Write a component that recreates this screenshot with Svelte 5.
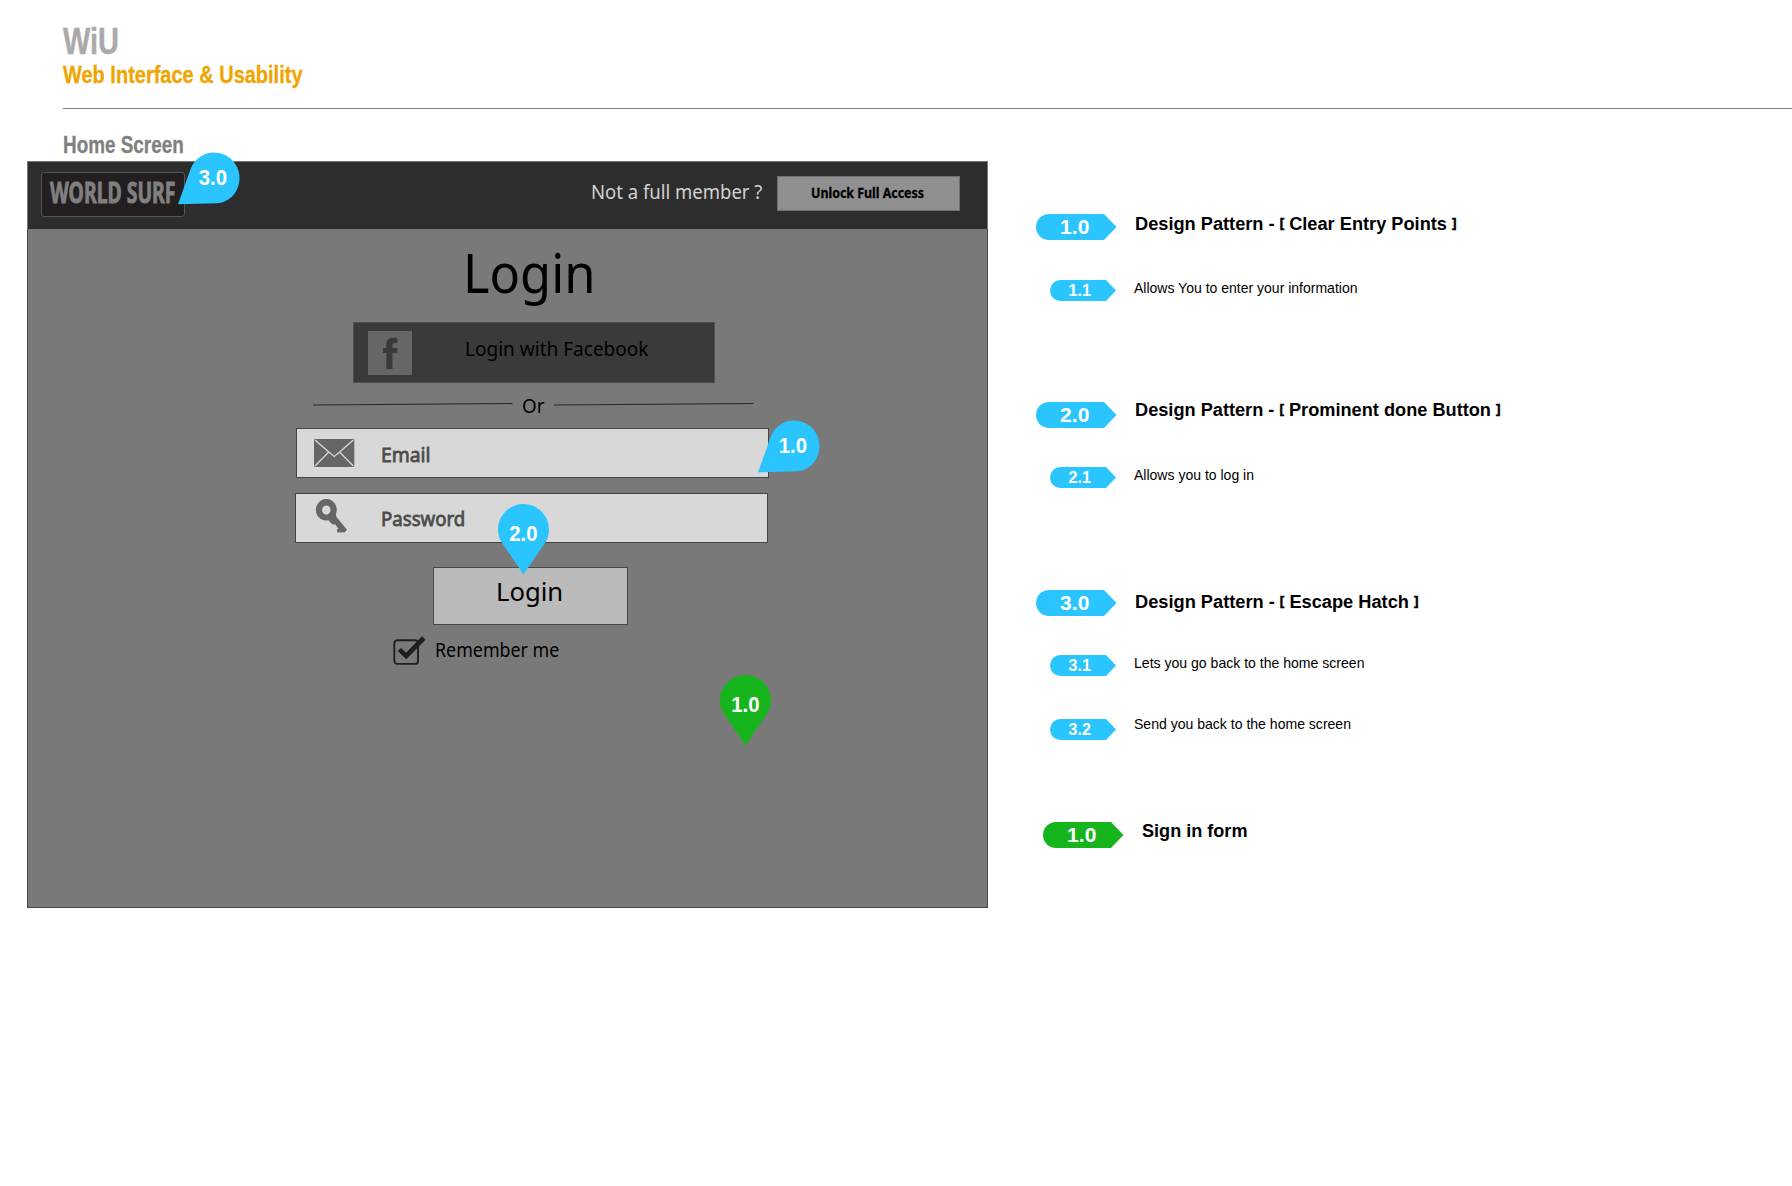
<script>
  const groups = [
    {
      kind: 'first',
      rows: [
        { tag: '1.0', text: 'Design Pattern - [ Clear Entry Points ]', width: 321.5, base: 16, major: true },
        { tag: '1.1', text: 'Allows You to enter your information', width: 223.5, base: 13 }
      ]
    },
    {
      kind: 'second',
      rows: [
        { tag: '2.0', text: 'Design Pattern - [ Prominent done Button ]', width: 365.5, base: 14, major: true },
        { tag: '2.1', text: 'Allows you to log in', width: 120, base: 13 }
      ]
    },
    {
      kind: 'third',
      rows: [
        { tag: '3.0', text: 'Design Pattern - [ Escape Hatch ]', width: 283.5, base: 18, major: true },
        { tag: '3.1', text: 'Lets you go back to the home screen', width: 230.5, base: 12.7 },
        { tag: '3.2', text: 'Send you back to the home screen', width: 217, base: 10 }
      ]
    },
    {
      kind: 'green',
      rows: [{ tag: '1.0', text: 'Sign in form', width: 105.5, base: 15, major: true }]
    }
  ];

  // Brackets are set smaller than the words around them.
  const pieces = (text) => text.split(/([[\]])/).filter((p) => p !== '');
</script>

{#snippet label(text, kind, width, height, base)}
  <svg class="label {kind}" {width} {height}>
    <text x="0" y={base} textLength={width} lengthAdjust="spacingAndGlyphs">{text}</text>
  </svg>
{/snippet}

{#snippet drop(text, place)}
  <svg class="drop {place}" width="62" height="53" viewBox="0 0 62 53">
    <path d="M0 52.300 L13 16 C17 6.500 26 0.500 35.700 0.500 C50 0.500 61.500 12 61.500 26 C61.500 39 52 50.500 39 51.300 Z" />
    <text x="20.700" y="32.500" textLength="28.300" lengthAdjust="spacingAndGlyphs">{text}</text>
  </svg>
{/snippet}

{#snippet pin(text, place)}
  <svg class="pin {place}" width="51" height="71" viewBox="0 0 51 71">
    <path d="M25.500 0 C11.500 0 0 11.500 0 25.500 C0 31 1.500 35.500 4.500 39.500 L25.500 70.500 L46.500 39.500 C49.500 35.500 51 31 51 25.500 C51 11.500 39.500 0 25.500 0 Z" />
    <text x="11.300" y="36.500" textLength="28.300" lengthAdjust="spacingAndGlyphs">{text}</text>
  </svg>
{/snippet}

<div class="page">
  <header class="masthead">
    {@render label('WiU', 'brand', 56, 56, 54)}
    {@render label('Web Interface & Usability', 'tagline', 239.5, 30, 27)}
  </header>

  <div class="title">{@render label('Home Screen', 'caption', 120.7, 52, 44.3)}</div>

  <main class="columns">
    <section class="screen">
      <div class="topbar">
        <div class="logo">
          <svg class="surf" width="125.5" height="43">
            <text x="0" y="30" transform="scale(0.685 1)" textLength="183.200" lengthAdjust="spacingAndGlyphs">WORLD SURF</text>
          </svg>
        </div>
        <div class="member">{@render label('Not a full member ?', 'light', 171.3, 67, 37)}</div>
        <div class="unlock">{@render label('Unlock Full Access', 'small-bold', 113, 33, 21)}</div>
      </div>

      <div class="form">
        <div class="heading">{@render label('Login', 'huge', 132.5, 93, 63.8)}</div>

        <div class="facebook">
          <svg class="fb-icon" width="44" height="44" viewBox="0 0 44 44">
            <rect width="44" height="44" fill="#666" />
            <path fill="#3a3a3a" d="M18.300 38 V22 H15 V17 H18.300 V14 C18.300 9 21 6.700 25.500 6.700 H29.300 V12 H27 C25.200 12 24.500 12.700 24.500 14.500 V17 H29.300 V22 H24.500 V38 Z" />
          </svg>
          {@render label('Login with Facebook', 'myriad', 183.5, 59, 33)}
        </div>

        <div class="divider">
          <svg width="199.5" height="4"><path d="M0 3 L199.500 1.500" /></svg>
          {@render label('Or', 'myriad', 22.5, 45, 29.7)}
          <svg width="199.5" height="4"><path d="M0 3 L199.500 1.500" /></svg>
        </div>

        <div class="field email">
          <svg class="mail" width="40" height="28" viewBox="0 0 40 28">
            <rect width="40.300" height="28" rx="1" fill="#666" />
            <path d="M1 1 L16 14 L20.200 17.500 L24.500 14 L39.300 1 M1 27 L14.500 13.300 M39.300 27 L25.800 13.300" fill="none" stroke="#d8d8d8" stroke-width="1.300" />
          </svg>
          {@render label('Email', 'fieldname', 49.5, 48, 33)}
        </div>

        <div class="field password">
          <svg class="key" width="31" height="34" viewBox="0 0 31 34">
            <path fill="#666" fill-rule="evenodd" d="M10.300 0 A10.500 10.800 0 1 1 10.290 0 Z M10.300 6.500 A4.200 4.500 0 1 0 10.310 6.500 Z" />
            <path fill="#666" d="M19.500 14.500 L20.500 18 L30.800 30.500 L29 33.300 L21.500 33.500 L20.700 31.500 L22 29.500 L19.500 25.500 L16.500 25.500 L12.500 21.500 Z" />
          </svg>
          {@render label('Password', 'fieldname', 84.3, 48, 32)}
        </div>

        <div class="submit">{@render label('Login', 'button-text', 67.2, 56, 32.7)}</div>

        <div class="remember">
          <svg class="check" width="33" height="30" viewBox="0 0 33 30">
            <rect x="1.300" y="4.300" width="23.700" height="23.600" rx="3" fill="none" stroke="#1e1e1e" stroke-width="1.900" />
            <path d="M4.700 15 L8 12 L13 16.700 L29 0.300 L32.500 3.700 L13.300 23.300 Z" fill="#1e1e1e" />
          </svg>
          {@render label('Remember me', 'remember-text', 124.3, 30, 21)}
        </div>
      </div>

      {@render drop('3.0', 'at-logo')}
      {@render drop('1.0', 'at-email')}
      {@render pin('2.0', 'at-submit')}
      {@render pin('1.0', 'at-form')}
    </section>

    <aside class="notes">
      {#each groups as group}
        <div class="group {group.kind}">
          {#each group.rows as row}
            <div class="row" class:major={row.major}>
              {#if row.major}
                <svg class="tag" width="81" height="26" viewBox="0 0 81 26">
                  <path d="M13 0 H68 L80.500 13 L68 26 H13 A13 13 0 0 1 13 0 Z" />
                  <text x="24" y="20.200" font-size="21" textLength="29.500">{row.tag}</text>
                </svg>
              {:else}
                <svg class="tag" width="66" height="21" viewBox="0 0 66 21">
                  <path d="M10.500 0 H56 L66 10.500 L56 21 H10.500 A10.500 10.500 0 0 1 10.500 0 Z" />
                  <text x="18.500" y="16" font-size="16" textLength="22.500">{row.tag}</text>
                </svg>
              {/if}
              <svg class="label note" width={row.width} height="21">
                <text x="0" y={row.base} textLength={row.width} lengthAdjust="spacingAndGlyphs">{#each pieces(row.text) as piece}{#if piece === '[' || piece === ']'}<tspan class="bracket" dy="-2.7">{piece}</tspan>{:else}<tspan dy={piece.startsWith(' ') ? 2.7 : 0}>{piece}</tspan>{/if}{/each}</text>
              </svg>
            </div>
          {/each}
        </div>
      {/each}
    </aside>
  </main>
</div>

<style>
  :global(body) {
    margin: 0;
    background: #fff;
  }

  .page {
    width: 1792px;
    height: 1186px;
    overflow: hidden;
    background: #fff;
    font-family: 'Liberation Sans', sans-serif;
  }

  svg {
    display: block;
    flex: none;
    overflow: visible;
  }

  text {
    white-space: pre;
  }

  .masthead {
    box-sizing: border-box;
    height: 109px;
    margin-left: 62.500px;
    border-bottom: 1px solid #808080;
  }

  .brand { font-size: 37.500px; font-weight: 700; fill: #aaa; stroke: #aaa; stroke-width: 0.500; }
  .tagline { font-size: 24px; font-weight: 700; fill: #f0a400; stroke: #f0a400; stroke-width: 0.300; }
  .title { margin-left: 62.500px; }
  .caption { font-size: 23px; font-weight: 700; fill: #808080; stroke: #808080; stroke-width: 0.300; }

  .columns {
    display: flex;
    align-items: flex-start;
    padding-left: 27px;
  }

  .screen {
    position: relative;
    box-sizing: border-box;
    width: 961px;
    height: 747px;
    border: 1px solid #484848;
    border-top: 0;
    background: #797979;
    font-family: 'Noto Sans', sans-serif;
  }

  .topbar {
    box-sizing: border-box;
    display: flex;
    align-items: flex-start;
    width: 961px;
    height: 68px;
    margin-left: -1px;
    border: 1px solid #777;
    border-bottom: 0;
    background: #2d2d2d;
  }

  .logo {
    box-sizing: border-box;
    width: 144px;
    height: 45px;
    margin: 10px 0 0 13px;
    padding-left: 8px;
    border: 1px solid #555;
    border-radius: 3px;
    background: #231f20;
  }

  .surf {
    font-size: 28px;
    font-weight: 700;
    fill: #808080;
    stroke: #808080;
    stroke-width: 0.900;
  }

  .member { margin-left: 406.200px; }
  .light { font-size: 20.500px; fill: #d2d2d2; }

  .unlock {
    box-sizing: border-box;
    width: 183px;
    height: 35px;
    margin: 14px 0 0 14.500px;
    padding-left: 32.700px;
    border: 1px solid #707070;
    background: #909090;
  }

  .small-bold { font-size: 13.600px; font-weight: 700; stroke: #000; stroke-width: 0.300; }
  .form { padding-left: 267px; }
  .heading { margin-left: 167.500px; }
  .huge { font-size: 54px; }
  .myriad { font-size: 20.500px; }

  .facebook {
    box-sizing: border-box;
    display: flex;
    width: 362px;
    height: 61px;
    margin-left: 58px;
    border: 1px solid #505050;
    background: #3a3a3a;
  }

  .fb-icon { margin: 8px 52.900px 0 14px; }

  .divider {
    display: flex;
    height: 45px;
    margin-left: 18px;
  }

  .divider > svg:first-child { margin: 19px 9.300px 0 0; }
  .divider > svg:last-child { margin: 19px 0 0 9.500px; }
  .divider path { stroke: #2b2b2b; stroke-width: 1.200; }

  .field {
    box-sizing: border-box;
    display: flex;
    width: 473px;
    height: 50px;
    border: 1px solid #444;
    background: #d8d8d8;
  }

  .email { margin-left: 1px; }
  .password { margin-top: 15px; }
  .mail { margin: 10px 26.700px 0 17.300px; }
  .key { margin: 5px 34px 0 20px; }

  .fieldname {
    font-size: 20.500px;
    fill: #4c4c4c;
    stroke: #4c4c4c;
    stroke-width: 0.800;
  }

  .submit {
    box-sizing: border-box;
    width: 195px;
    height: 58px;
    margin: 24px 0 0 138px;
    padding-left: 61.900px;
    border: 1px solid #484848;
    background: #bababa;
  }

  .button-text { font-size: 26px; }

  .remember {
    display: flex;
    margin: 11px 0 0 98px;
  }

  .check { margin-right: 9.300px; }
  .remember-text { font-size: 19.500px; }

  .drop,
  .pin {
    position: absolute;
    font-family: 'Liberation Sans', sans-serif;
    font-size: 22px;
    font-weight: 700;
    fill: #fff;
  }

  .drop path,
  .pin path,
  .tag path {
    fill: #2ac5ff;
  }

  .at-logo { left: 150.300px; top: -9px; }
  .at-email { left: 730.400px; top: 259px; }
  .at-submit { left: 470px; top: 343px; }
  .at-form { left: 692px; top: 514.300px; }

  .pin.at-form path,
  .green .tag path {
    fill: #17b51d;
  }

  .notes {
    padding: 53px 0 0 48.300px;
  }

  .row {
    display: flex;
    height: 21px;
    margin: 42.500px 0 0 14.200px;
  }

  .major { height: 26px; margin: 0; }
  .major + .row { margin-top: 40px; }
  .second { margin-top: 101px; }
  .third { margin-top: 102px; }
  .second .major + .row { margin-top: 39px; }
  .third .major + .row { margin-top: 39.300px; }
  .green { margin-top: 82px; padding-left: 7px; }

  .tag {
    margin-right: 18px;
    font-weight: 700;
    fill: #fff;
  }

  .note { font-size: 14.500px; }
  .major .tag { margin-right: 17.800px; }
  .major .note { font-size: 18.300px; font-weight: 700; }
  .bracket { font-size: 13.500px; stroke: #000; stroke-width: 0.500; }
</style>
